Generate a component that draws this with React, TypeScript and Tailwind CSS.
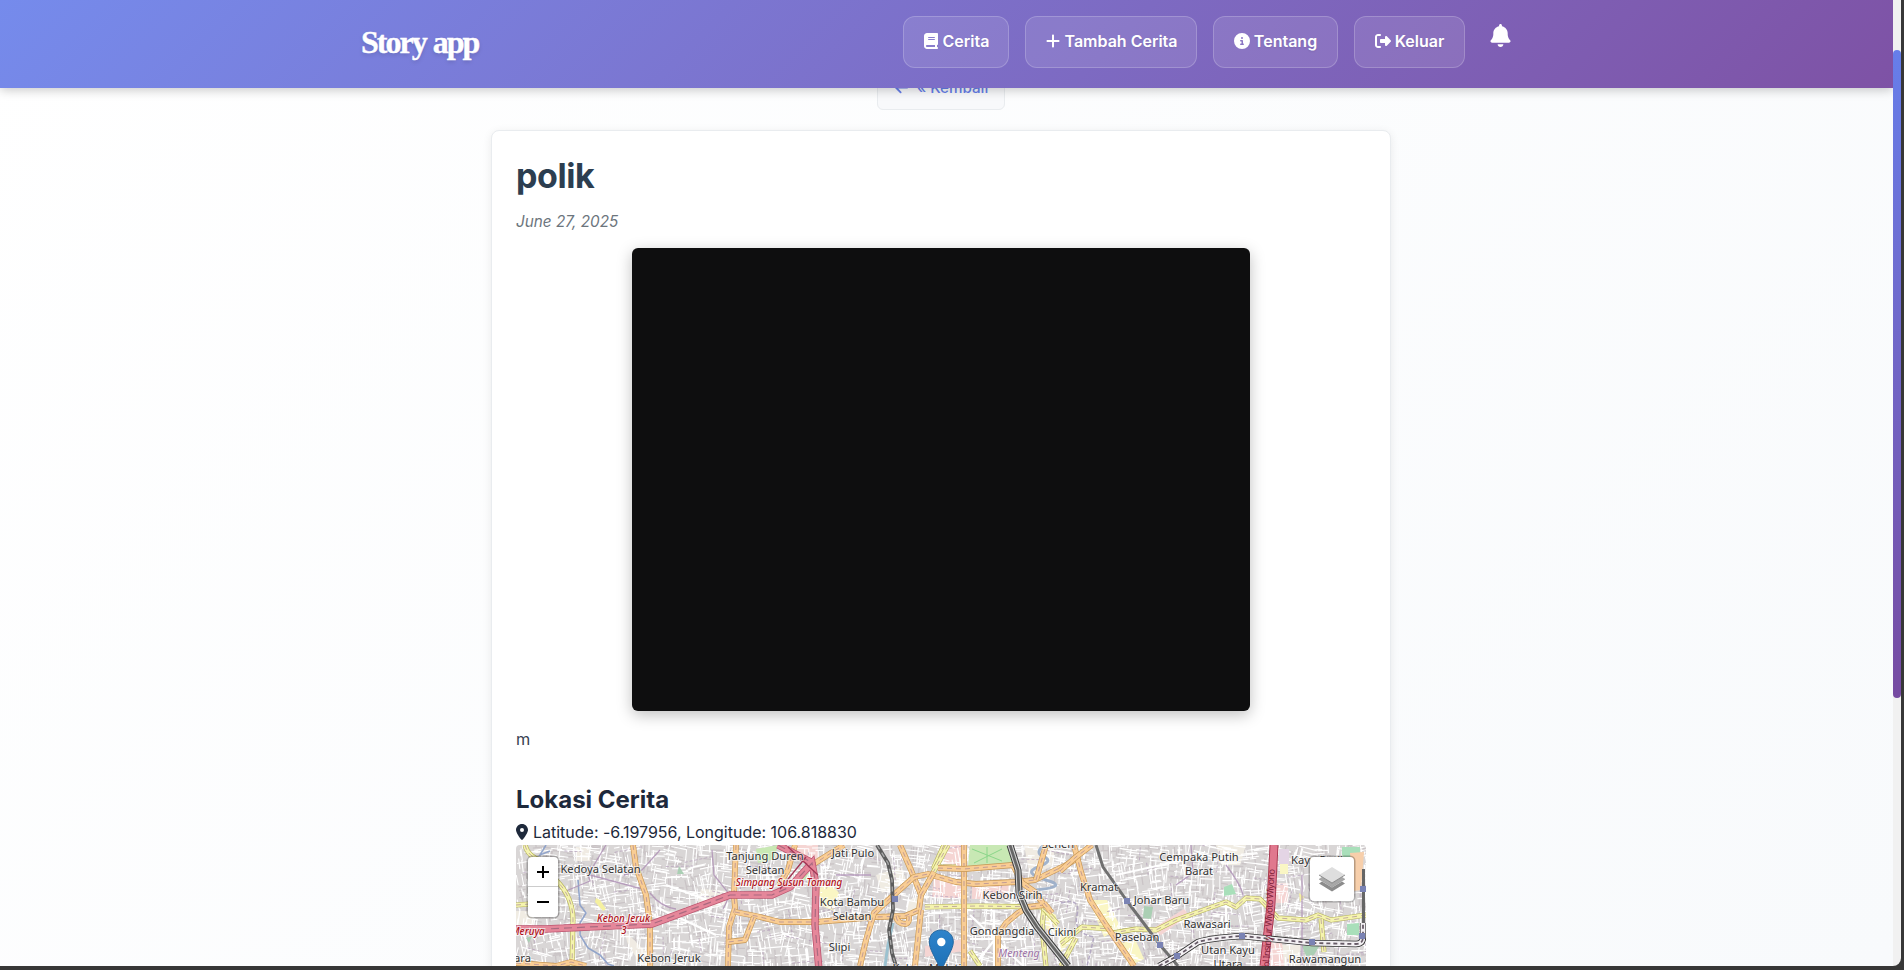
import { FaBell, FaBook, FaCircleInfo, FaLocationDot, FaPlus, FaRightFromBracket, FaArrowLeft } from "react-icons/fa6";
import type { ReactNode } from "react";

function makeRandom(seed: number) {
  let s = seed;
  return () => {
    s = (s * 1664525 + 1013904223) % 4294967296;
    return s / 4294967296;
  };
}

function buildStreets() {
  const rnd = makeRandom(42);
  let white = "";
  let lilac = "";
  let gray = "";
  for (let gx = 0; gx < 850; gx += 24) {
    for (let gy = -4; gy < 122; gy += 21) {
      const a = (rnd() - 0.5) * 0.5;
      const c = Math.cos(a);
      const s = Math.sin(a);
      const seg = (x: number, y: number, dx: number, dy: number) =>
        `M${(gx + x).toFixed(1)} ${(gy + y).toFixed(1)}l${(dx * c - dy * s).toFixed(1)} ${(dx * s + dy * c).toFixed(1)}`;
      for (let k = 0; k < 14; k++) {
        const horizontal = rnd() > 0.5;
        const len = 5 + rnd() * 13;
        white += seg(rnd() * 22, rnd() * 20, horizontal ? len : 0, horizontal ? 0 : len);
      }
      for (let k = 0; k < 7; k++) {
        const horizontal = rnd() > 0.5;
        const len = 4 + rnd() * 12;
        gray += seg(rnd() * 20, rnd() * 18, horizontal ? len : 0, horizontal ? 0 : len);
      }
      if (rnd() > 0.3) {
        const horizontal = rnd() > 0.5;
        const len = 12 + rnd() * 16;
        lilac += seg(rnd() * 18, rnd() * 18, horizontal ? len : 0, horizontal ? 0 : len);
      }
    }
  }
  return { white, lilac, gray };
}

const streets = buildStreets();

function Road({ d, fill, edge, w }: { d: string; fill: string; edge: string; w: number }) {
  return (
    <g fill="none" strokeLinejoin="round">
      <path d={d} stroke={edge} strokeWidth={w + 0.6} />
      <path d={d} stroke={fill} strokeWidth={w - 0.6} />
      <path d={d} stroke="#a58296" strokeWidth="1" strokeDasharray="5 4" opacity="0.65" />
    </g>
  );
}

const orangeRoads = [
  "M117 0L120 22L130 50L134 80V121",
  "M220 0L218 50L219 63L213 82L212 121",
  "M219 67L240 71L264 77L300 77L360 72L389 71L403 65L405 50L395 25L384 0",
  "M238 72L229 95L212 97",
  "M0 118L40 121L55 117L70 121",
  "M263 40L272 25L279 0",
  "M296 20L315 8L328 0",
  "M344 121L350 95L358 68L380 48L398 32L412 29L440 37L460 39L500 37L519 35L550 20L564 12",
  "M405 50L418 27M405 65L399 121",
  "M380 71Q381 79 390 79Q394 77 393 71",
  "M448 0V121",
  "M422 23L448 24L497 20L506 38L519 47L528 60L512 62L502 68L490 78L482 90V121",
  "M520 35L530 0M528 58L536 68",
  "M558 0L565 27L574 55L590 80L612 112L618 121",
  "M544 26L560 12L576 0",
];
const yellowRoads = [
  "M9 0Q12 12 26 16L40 35Q57 52 57 75L56 121",
  "M0 60L14 59",
  "M428 0L418 22L440 22",
  "M409 62L462 61L526 62",
  "M432 0L405 50",
  "M528 61L526 83L530 121",
  "M528 64L542 79",
  "M454 106L464 121",
  "M596 88L620 84L640 85L660 75L693 63L710 57L720 62L730 53L744 54L762 73L790 75L802 70L815 75L850 70",
  "M545 99L566 82L596 84M560 93L545 121",
  "M805 74L808 107",
];

const stations: [number, number][] = [
  [611, 56], [644, 100], [661, 111], [726, 91], [796, 97], [847, 44], [846, 91], [379, 54],
];

const motorway = "M-4 84H30L136 79L214 50L256 50L274 42L296 18L300 40L299 80L303 125M262 0L295 17";
const loopLine = "M643 121L661 111L682 97Q695 93 726 91L796 98L840 99Q847 99 847 92V78";

function Place({ x, y, children }: { x: number; y: number; children: ReactNode }) {
  return (
    <text x={x} y={y} textAnchor="middle" fontSize="11.15" fill="#333" stroke="#ffffff" strokeOpacity="0.6" strokeWidth="2" paintOrder="stroke">
      {children}
    </text>
  );
}

function Junction({ x, y, children }: { x: number; y: number; children: ReactNode }) {
  return (
    <text x={x} y={y} textAnchor="middle" fontSize="9.8" fontStyle="italic" fontWeight="500" fill="#b01220" stroke="#fff" strokeOpacity="0.7" strokeWidth="2" paintOrder="stroke">
      {children}
    </text>
  );
}

function CityMap() {
  return (
    <svg className="block h-full w-full font-['Noto_Sans',sans-serif]" viewBox="0 0 850 121">
      <defs>
        <linearGradient id="pin" x1="0" y1="0" x2="0" y2="1">
          <stop offset="0" stopColor="#2e84cb" />
          <stop offset="1" stopColor="#1c6fb5" />
        </linearGradient>
      </defs>
      <rect width="850" height="121" fill="#d9d6d6" />
      <path d={streets.gray} fill="none" stroke="#cac4c6" strokeWidth="1.3" />
      <g fill="#f0ece3">
        <path d="M60 2h14v14H60zM108 85l20 20 6-2v18h-8L112 100zM0 66h18v14H0zM392 55l12-4v20h-14zM185 44l28 2-4 14-28 4z" />
        <path d="M360 30l26-8 4 14-24 12zM508 0h30v20l-24 12zM700 0h30l-6 20h-18zM760 100h24v21h-24z" />
      </g>
      <g fill="#faf6c4">
        <path d="M301 44l14-5 8 9-5 18-14-6zM573 55l18 0 14 28-17 9zM544 84l14 10-14 14zM600 98l20-2 8 18-14 7zM530 64l10 6 2 18-12-4z" />
      </g>
      <g fill="#f5d5d3">
        <path d="M430 0h17v21h-19zM418 30l28 8v15h-30zM456 40h38v14h-38zM752 92l14 4 2 25h-18zM760 38h12v20h-12zM280 0h22v18l-20-4z" />
      </g>
      <path d={streets.white} fill="none" stroke="#fff" strokeWidth="1.1" />
      <path d={streets.lilac} fill="none" stroke="#b49dba" strokeWidth="0.9" strokeDasharray="3 2" opacity="0.8" />
      <path fill="#f5d5d3" d="M409 101l38-7v12l-38 6zM636 84l32-20 5 6-28 20z" />
      <path fill="#e4d5e5" d="M763 4h10v16h-10z" />
      <path fill="#faf6c4" d="M306 45l10-3 6 7-5 12-10-4zM764 19h8v10h-8z" />
      <path fill="#c8e8b4" d="M454 0h38l6 19-46 2zM240 4l22-4-4 14-16 4zM283 26l10 2-5 8-9-1z" />
      <path fill="#a9dfba" d="M708 42l8-3 4 10-12 2zM826 2h18v10h-18zM831 79l12-1v12h-12z" />
      <path fill="#f7cfab" d="M834 8l14-1-3 38-8 1z" />
      <path fill="#abcfb4" d="M163 21l5 8h-7zM628 61l9 1-2 12-8-1zM786 101l18-1-6 10-8 1zM10 93l6-2-3 7z" />
      <path fill="#f5f1a0" d="M80 53l4 2 6 9-3 2-8-9zM783 48l5 4-4 5z" />
      <g fill="none" stroke="#fff" strokeWidth="2.2">
        <path d="M454 70L506 120M500 68L460 118M478 66V121M454 94H510M710 52V95M600 30L690 10M150 40L205 60M140 62L200 90" />
      </g>
      <path d="M456 4l30 12M486 4l-28 14M471 2v16" stroke="#8bd68a" strokeWidth="1" fill="none" />
      <g fill="none" stroke="#8a9fc8" strokeWidth="1.6" opacity="0.9">
        <path d="M30 0L24 10L34 6M62 35L64 60L70 68L64 78V90L72 103L84 110L92 119L98 121" />
        <path d="M528 0Q518 8 528 12T522 22T530 35T519 45" stroke="#98acc8" strokeWidth="3" />
        <path d="M377 78L372 100L369 121" stroke="#95bfce" strokeWidth="3" />
        <path d="M545 58Q565 52 561 70T578 92L571 121" stroke="#b0a5c0" strokeDasharray="4 2" />
      </g>
      <g fill="none" stroke="#ad8fb5" strokeWidth="1.3" opacity="0.8">
        <path d="M90 0L72 30L74 36L50 46L46 47M144 5L126 25L108 30M196 5L198 30L214 50L207 64M134 48Q145 62 160 64" />
        <path d="M74 30L130 45M320 30L355 30M675 0L677 28L660 40M710 20Q725 40 727 50M786 30V120" />
      </g>
      {yellowRoads.map((d) => <Road key={d} d={d} fill="#f5f4ae" edge="#b5b15a" w={4.4} />)}
      {orangeRoads.map((d) => <Road key={d} d={d} fill="#f9cd94" edge="#c69552" w={5.2} />)}
      <g fill="none">
        <path d={motorway} stroke="#bd5670" strokeWidth="7.4" />
        <path d={motorway} stroke="#e5879a" strokeWidth="5.8" />
        <path d={motorway} stroke="#a96b80" strokeWidth="1.2" strokeDasharray="8 5" />
        <path d="M264 44L290 12M272 2L302 30" stroke="#a33655" strokeWidth="1.3" />
        <path d="M758 0L755 60L748 121" stroke="#a93a52" strokeWidth="9" />
        <path d="M758 0L755 60L748 121" stroke="#e0788e" strokeWidth="7" />
      </g>
      <g fill="none" strokeLinejoin="round">
        <path d="M361 0L372 18L376 35L377 65L373 85L376 108L380 121" stroke="#5c5c5c" strokeWidth="3.8" />
        <path d="M361 0L372 18L376 35L377 65L373 85L376 108L380 121" stroke="#aaa" strokeWidth="1.3" strokeDasharray="5 4" />
        <path d="M494 0L502 25L503 48L510 65L521 82L552 121" stroke="#3c3c3c" strokeWidth="7" />
        <path d="M494 0L502 25L503 48L510 65L521 82L552 121" stroke="#d0d0d0" strokeWidth="5" />
        <path d="M494 0L502 25L503 48L510 65L521 82L552 121" stroke="#666" strokeWidth="2.8" />
        <path d="M580 0L587 22L611 56L644 100L662 121" stroke="#707070" strokeWidth="3" />
        <path d="M847.5 90V24" stroke="#666" strokeWidth="3" />
        <path d={loopLine} stroke="#303030" strokeWidth="6.4" />
        <path d={loopLine} stroke="#f3f0f3" strokeWidth="4.8" />
        <path d={loopLine} stroke="#665a66" strokeWidth="1.8" strokeDasharray="4 3" />
      </g>
      {stations.map(([x, y]) => <rect key={`${x}-${y}`} x={x - 3} y={y - 3} width="6" height="6" fill="#7a83b4" />)}
      <text fontSize="9.4" fill="#81223a" transform="translate(753 126) rotate(-86.8)" textLength="102">Tol Insinyur Wiyoto Wiyono</text>
      <Place x={84.5} y={28}>Kedoya Selatan</Place>
      <Place x={249} y={15}>Tanjung Duren</Place>
      <Place x={249} y={29}>Selatan</Place>
      <Place x={337} y={12}>Jati Pulo</Place>
      <Place x={336} y={61}>Kota Bambu</Place>
      <Place x={336} y={75}>Selatan</Place>
      <Place x={323.5} y={106}>Slipi</Place>
      <Place x={153} y={117}>Kebon Jeruk</Place>
      <Place x={3} y={117}>uara</Place>
      <Place x={542} y={3}>Senen</Place>
      <Place x={496.5} y={54}>Kebon Sirih</Place>
      <Place x={486} y={90}>Gondangdia</Place>
      <Place x={546} y={91}>Cikini</Place>
      <Place x={583} y={46}>Kramat</Place>
      <Place x={645.5} y={59}>Johar Baru</Place>
      <Place x={621} y={96}>Paseban</Place>
      <Place x={683} y={16}>Cempaka Putih</Place>
      <Place x={683} y={30}>Barat</Place>
      <Place x={691} y={83}>Rawasari</Place>
      <Place x={712} y={109}>Utan Kayu</Place>
      <Place x={712} y={123}>Utara</Place>
      <Place x={809} y={118}>Rawamangun</Place>
      <Place x={803} y={19}>Kayu Putih</Place>
      <Place x={411} y={127}>Kebon Melati</Place>
      <Junction x={273} y={40.5}>Simpang Susun Tomang</Junction>
      <Junction x={107.5} y={77}>Kebon Jeruk</Junction>
      <Junction x={108} y={89}>3</Junction>
      <Junction x={12} y={90}>Meruya</Junction>
      <text x="503" y="112" textAnchor="middle" fontSize="10.6" fontStyle="italic" fill="#9b72a5" stroke="#fff" strokeWidth="1.5" paintOrder="stroke" strokeOpacity="0.7">Menteng</text>
      <path d="M425.3 85C418 85 413.3 90 413.3 97C413.3 104 419 112 425.3 126C431 112 437.3 104 437.3 97C437.3 90 432 85 425.3 85Z" fill="url(#pin)" stroke="#2769a0" strokeWidth="1" />
      <circle cx="425.3" cy="97" r="4.2" fill="#fff" />
    </svg>
  );
}

function LayersIcon() {
  return (
    <svg className="h-[26px] w-[26px]" viewBox="0 0 26 26">
      <path d="M0 17.5L13 25.5L26 17.5L23 15.5L13 21.5L3 15.5Z" fill="#8c8c8c" />
      <path d="M0 13.2L13 21.2L26 13.2L23 11.2L13 17.2L3 11.2Z" fill="#a8a8a8" stroke="#777" strokeWidth="0.3" />
      <path d="M0 9L13 1L26 9L13 17Z" fill="#dedede" />
      <path d="M0 9L13 17L26 9" fill="none" stroke="#777" strokeWidth="0.8" />
    </svg>
  );
}

function NavButton({ icon, label, width }: { icon: ReactNode; label: string; width: string }) {
  return (
    <a className={`flex h-[52px] ${width} items-center justify-center gap-1 rounded-xl border border-white/20 bg-white/10 pb-0.5 text-base font-semibold whitespace-nowrap text-white [text-shadow:0_1px_2px_rgba(0,0,0,0.1)]`}>
      {icon}
      <span>{label}</span>
    </a>
  );
}

export default function App() {
  return (
    <div className="flex h-[970px] w-[1904px] overflow-hidden bg-[#373737] pr-[3px] pb-1 font-[Inter,sans-serif]">
      <div className="flex h-[966px] w-[1901px] overflow-hidden rounded-br-lg">
        <div className="flex w-[1893px] flex-col overflow-hidden bg-linear-135 from-white to-[#f8fafc]">
          <header className="z-10 h-[88px] shrink-0 bg-linear-135 from-[#758bec] to-[#7e52a5] shadow-[0_2px_10px_rgba(0,0,0,0.22)]">
            <div className="ml-[361px] flex h-[88px] w-[1152px] items-start pt-4">
              <div className="h-[52px] w-[542px] font-['Liberation_Serif',serif] text-[32px] leading-[53px] font-bold tracking-[-2px] [word-spacing:1px] text-white [-webkit-text-stroke:0.4px_white] [text-shadow:0_2px_4px_rgba(0,0,0,0.15)]">Story app</div>
              <nav className="flex gap-4">
                <NavButton icon={<FaBook />} label="Cerita" width="w-[106px]" />
                <NavButton icon={<FaPlus />} label="Tambah Cerita" width="w-[172px]" />
                <NavButton icon={<FaCircleInfo />} label="Tentang" width="w-[125px]" />
                <NavButton icon={<FaRightFromBracket />} label="Keluar" width="w-[111px]" />
              </nav>
              <FaBell className="mt-2 ml-[24px] text-[23px] text-white" />
            </div>
          </header>
          <main className="ml-[491px] flex w-[900px] flex-col items-center">
            <a className="-mt-[22px] flex h-11 w-32 items-center justify-center gap-2 rounded-md border border-[#e9ecef] bg-[#f8f9fb] text-[15.2px] font-medium text-[#667eea]">
              <FaArrowLeft /> « Kembali
            </a>
            <article className="mt-5 h-[900px] w-full rounded-lg border border-[#e9ecef] bg-white px-6 shadow-[0_2px_10px_rgba(0,0,0,0.08)]">
              <h1 className="mt-[23px] text-[34px] leading-[44px] font-bold tracking-[-0.4px] text-[#2c3e50]">polik</h1>
              <p className="mt-3 text-[15.3px] leading-6 text-[#6c757d] italic">June 27, 2025</p>
              <div className="mx-auto mt-3.5 h-[463px] w-[618px] rounded-md bg-[#0e0e0f] shadow-[0_4px_15px_rgba(0,0,0,0.25)]" />
              <p className="mt-4 text-[16.3px] leading-6 text-[#374151]">m</p>
              <h2 className="mt-[31px] text-2xl leading-9 font-bold text-[#1e293b]">Lokasi Cerita</h2>
              <div className="flex h-[27px] items-center gap-[3px] text-base text-[#1e293b]">
                <FaLocationDot className="-ml-0.5" />
                <span className="tracking-[-0.01px]">Latitude: -6.197956, Longitude: 106.818830</span>
              </div>
              <div className="relative h-[121px] w-[850px] overflow-hidden rounded-t">
                <CityMap />
                <div className="absolute top-3 left-3 flex w-[30px] flex-col rounded-sm bg-white shadow-[0_0_0_1.5px_rgba(0,0,0,0.25)]">
                  <span className="flex h-[30px] items-center justify-center border-b border-[#ccc]">
                    <svg className="h-3 w-3" viewBox="0 0 12 12"><path d="M0 6H12M6 0V12" stroke="#000" strokeWidth="2" /></svg>
                  </span>
                  <span className="flex h-[30px] items-center justify-center">
                    <svg className="h-3 w-3" viewBox="0 0 12 12"><path d="M0 6H12" stroke="#000" strokeWidth="2" /></svg>
                  </span>
                </div>
                <div className="absolute top-3 right-3 flex h-11 w-11 items-center justify-center rounded bg-white shadow-[0_0_0_1.5px_rgba(0,0,0,0.25)]">
                  <LayersIcon />
                </div>
              </div>
            </article>
          </main>
        </div>
        <div className="w-2 bg-[#f1f1f1] pt-[50px]">
          <div className="h-[648px] w-2 rounded-full bg-linear-to-b from-[#667eea] to-[#764ba2]" />
        </div>
      </div>
    </div>
  );
}
